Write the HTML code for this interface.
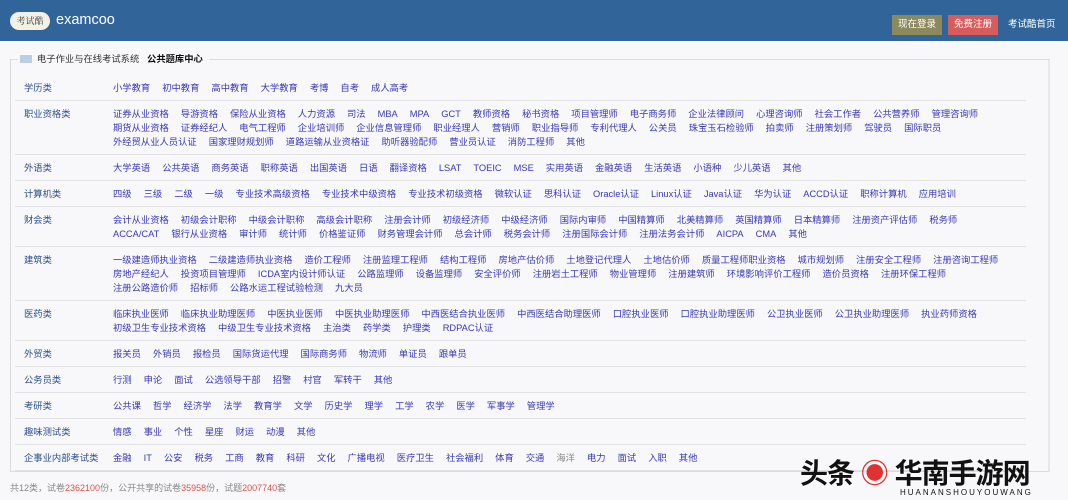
<!DOCTYPE html>
<html><head><meta charset="utf-8"><style>
*{margin:0;padding:0;box-sizing:border-box}
body{width:1068px;height:500px;overflow:hidden;background:#f8f8fa;font-family:"Liberation Sans","Noto Sans CJK SC",sans-serif;font-size:9.3px;position:relative}
.hd{height:41px;background:#31659a;position:relative}
.logo{position:absolute;left:10px;top:12px;width:40px;height:18px;background:#f3f0e6;border-radius:9px;color:#3a3a3a;font-size:9px;line-height:18px;text-align:center;font-family:"Noto Serif CJK SC",serif}
.brand{position:absolute;left:56px;top:12px;color:#fff;font-size:14.5px}
.btn{position:absolute;top:15px;height:20px;line-height:20px;color:#fff;font-size:9.5px;padding:0 6px}
.panel{position:absolute;left:10px;top:59px;width:1040px;height:413px;border:1px solid #dcdcdc;border-top:none;border-right:2px solid #e8e8e8}
.ptop{position:absolute;left:10px;top:59px;width:1040px;border-top:1px solid #dcdcdc}
.legend{position:absolute;left:18px;top:53px;background:#f8f8fa;padding:0 6px 0 2px;line-height:12px;color:#333}
.legend i{display:inline-block;width:12px;height:8px;background:#b9cde4;margin-right:5px;vertical-align:-1px}
.rows{position:absolute;left:15px;top:75px;width:1011px}
.r{display:flex;border-bottom:1px solid #e2e2e2;padding:6px 0 5px 0;line-height:14px;height:auto}
.r b{font-weight:normal;color:#2d4f8f;width:98px;padding-left:9px;flex:none}
.r div{flex:1}
.r p{white-space:nowrap}
.r a{color:#3838b8;margin-right:12px;white-space:nowrap;text-decoration:none}
.ft{position:absolute;left:10px;top:481px;color:#888;font-size:9px}
.ft em{font-style:normal;color:#d9534f}
.wm{position:absolute;left:800px;top:452px;font-size:28px;font-weight:bold;color:#111;letter-spacing:-1px}
</style></head><body>
<div class="hd">
<div class="logo">考试酷</div><div class="brand">examcoo</div>
<div class="btn" style="left:892px;background:#8c8a5c">现在登录</div>
<div class="btn" style="left:948px;background:#d95c5c">免费注册</div>
<div class="btn" style="left:1002px">考试酷首页</div>
</div>
<div class="panel"></div><div class="ptop"></div>
<div class="legend"><i></i>电子作业与在线考试系统 &nbsp; <b style="color:#111">公共题库中心</b></div>
<div class="rows">
<div class="r"><b>学历类</b><div><p><a>小学教育</a><a>初中教育</a><a>高中教育</a><a>大学教育</a><a>考博</a><a>自考</a><a>成人高考</a></p></div></div>
<div class="r"><b>职业资格类</b><div><p><a>证券从业资格</a><a>导游资格</a><a>保险从业资格</a><a>人力资源</a><a>司法</a><a>MBA</a><a>MPA</a><a>GCT</a><a>教师资格</a><a>秘书资格</a><a>项目管理师</a><a>电子商务师</a><a>企业法律顾问</a><a>心理咨询师</a><a>社会工作者</a><a>公共营养师</a><a>管理咨询师</a></p><p><a>期货从业资格</a><a>证券经纪人</a><a>电气工程师</a><a>企业培训师</a><a>企业信息管理师</a><a>职业经理人</a><a>营销师</a><a>职业指导师</a><a>专利代理人</a><a>公关员</a><a>珠宝玉石检验师</a><a>拍卖师</a><a>注册策划师</a><a>驾驶员</a><a>国际职员</a></p><p><a>外经贸从业人员认证</a><a>国家理财规划师</a><a>道路运输从业资格证</a><a>助听器验配师</a><a>营业员认证</a><a>消防工程师</a><a>其他</a></p></div></div>
<div class="r"><b>外语类</b><div><p><a>大学英语</a><a>公共英语</a><a>商务英语</a><a>职称英语</a><a>出国英语</a><a>日语</a><a>翻译资格</a><a>LSAT</a><a>TOEIC</a><a>MSE</a><a>实用英语</a><a>金融英语</a><a>生活英语</a><a>小语种</a><a>少儿英语</a><a>其他</a></p></div></div>
<div class="r"><b>计算机类</b><div><p><a>四级</a><a>三级</a><a>二级</a><a>一级</a><a>专业技术高级资格</a><a>专业技术中级资格</a><a>专业技术初级资格</a><a>微软认证</a><a>思科认证</a><a>Oracle认证</a><a>Linux认证</a><a>Java认证</a><a>华为认证</a><a>ACCD认证</a><a>职称计算机</a><a>应用培训</a></p></div></div>
<div class="r"><b>财会类</b><div><p><a>会计从业资格</a><a>初级会计职称</a><a>中级会计职称</a><a>高级会计职称</a><a>注册会计师</a><a>初级经济师</a><a>中级经济师</a><a>国际内审师</a><a>中国精算师</a><a>北美精算师</a><a>英国精算师</a><a>日本精算师</a><a>注册资产评估师</a><a>税务师</a></p><p><a>ACCA/CAT</a><a>银行从业资格</a><a>审计师</a><a>统计师</a><a>价格鉴证师</a><a>财务管理会计师</a><a>总会计师</a><a>税务会计师</a><a>注册国际会计师</a><a>注册法务会计师</a><a>AICPA</a><a>CMA</a><a>其他</a></p></div></div>
<div class="r"><b>建筑类</b><div><p><a>一级建造师执业资格</a><a>二级建造师执业资格</a><a>造价工程师</a><a>注册监理工程师</a><a>结构工程师</a><a>房地产估价师</a><a>土地登记代理人</a><a>土地估价师</a><a>质量工程师职业资格</a><a>城市规划师</a><a>注册安全工程师</a><a>注册咨询工程师</a></p><p><a>房地产经纪人</a><a>投资项目管理师</a><a>ICDA室内设计师认证</a><a>公路监理师</a><a>设备监理师</a><a>安全评价师</a><a>注册岩土工程师</a><a>物业管理师</a><a>注册建筑师</a><a>环境影响评价工程师</a><a>造价员资格</a><a>注册环保工程师</a></p><p><a>注册公路造价师</a><a>招标师</a><a>公路水运工程试验检测</a><a>九大员</a></p></div></div>
<div class="r"><b>医药类</b><div><p><a>临床执业医师</a><a>临床执业助理医师</a><a>中医执业医师</a><a>中医执业助理医师</a><a>中西医结合执业医师</a><a>中西医结合助理医师</a><a>口腔执业医师</a><a>口腔执业助理医师</a><a>公卫执业医师</a><a>公卫执业助理医师</a><a>执业药师资格</a></p><p><a>初级卫生专业技术资格</a><a>中级卫生专业技术资格</a><a>主治类</a><a>药学类</a><a>护理类</a><a>RDPAC认证</a></p></div></div>
<div class="r"><b>外贸类</b><div><p><a>报关员</a><a>外销员</a><a>报检员</a><a>国际货运代理</a><a>国际商务师</a><a>物流师</a><a>单证员</a><a>跟单员</a></p></div></div>
<div class="r"><b>公务员类</b><div><p><a>行测</a><a>申论</a><a>面试</a><a>公选领导干部</a><a>招警</a><a>村官</a><a>军转干</a><a>其他</a></p></div></div>
<div class="r"><b>考研类</b><div><p><a>公共课</a><a>哲学</a><a>经济学</a><a>法学</a><a>教育学</a><a>文学</a><a>历史学</a><a>理学</a><a>工学</a><a>农学</a><a>医学</a><a>军事学</a><a>管理学</a></p></div></div>
<div class="r"><b>趣味测试类</b><div><p><a>情感</a><a>事业</a><a>个性</a><a>星座</a><a>财运</a><a>动漫</a><a>其他</a></p></div></div>
<div class="r"><b>企事业内部考试类</b><div><p><a>金融</a><a>IT</a><a>公安</a><a>税务</a><a>工商</a><a>教育</a><a>科研</a><a>文化</a><a>广播电视</a><a>医疗卫生</a><a>社会福利</a><a>体育</a><a>交通</a><a style="color:#888">海洋</a><a>电力</a><a>面试</a><a>入职</a><a>其他</a></p></div></div>
</div>
<div class="ft">共12类，试卷<em>2362100</em>份，公开共享的试卷<em>35958</em>份，试题<em>2007740</em>套</div>
<div class="wm">头条 <span style="color:#d33">◉</span> 华南手游网<div style="font-size:8px;letter-spacing:2px;font-weight:normal;margin-left:100px;margin-top:-4px">HUANANSHOUYOUWANG</div></div>
</body></html>
